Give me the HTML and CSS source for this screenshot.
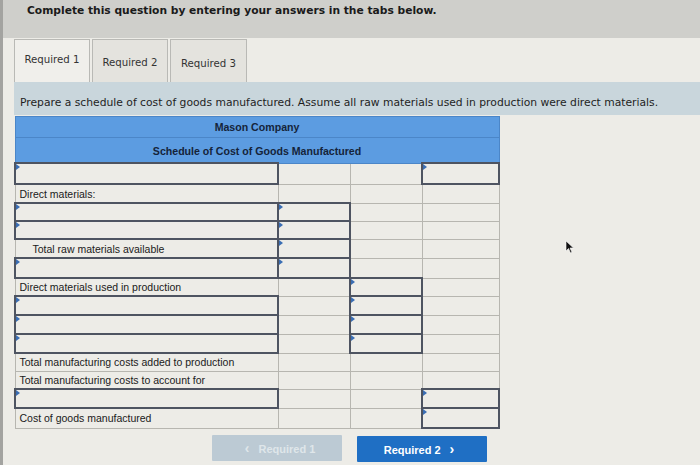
FILE: index.html
```html
<!DOCTYPE html>
<html>
<head>
<meta charset="utf-8">
<link rel="stylesheet" href="styles.css">
</head>
<body>
<div class="page">
  <div class="topbar">Complete this question by entering your answers in the tabs below.</div>
  <div class="tabs">
    <div class="tab active">Required 1</div>
    <div class="tab">Required 2</div>
    <div class="tab">Required 3</div>
  </div>
  <div class="prompt">Prepare a schedule of cost of goods manufactured. Assume all raw materials used in production were direct materials.</div>
  <table class="sched">
    <colgroup><col class="c-label"><col class="c-num"><col class="c-num"><col class="c-last"></colgroup>
    <tr class="hd"><th colspan="4">Mason Company</th></tr>
    <tr class="hd hd2"><th colspan="4">Schedule of Cost of Goods Manufactured</th></tr>
    <tr class="r21"><td class="in"></td><td></td><td></td><td class="in"></td></tr>
    <tr><td>Direct materials:</td><td></td><td></td><td></td></tr>
    <tr class="r18"><td class="in"></td><td class="in"></td><td></td><td></td></tr>
    <tr class="r18"><td class="in"></td><td class="in"></td><td></td><td></td></tr>
    <tr><td class="indent">Total raw materials available</td><td class="in"></td><td></td><td></td></tr>
    <tr class="r20"><td class="in"></td><td class="in"></td><td></td><td></td></tr>
    <tr class="r18"><td>Direct materials used in production</td><td></td><td class="in"></td><td></td></tr>
    <tr><td class="in"></td><td></td><td class="in"></td><td></td></tr>
    <tr><td class="in"></td><td></td><td class="in"></td><td></td></tr>
    <tr><td class="in"></td><td></td><td class="in"></td><td></td></tr>
    <tr class="r18"><td>Total manufacturing costs added to production</td><td></td><td></td><td></td></tr>
    <tr class="r18"><td>Total manufacturing costs to account for</td><td></td><td></td><td></td></tr>
    <tr><td class="in"></td><td></td><td></td><td class="in"></td></tr>
    <tr class="r20"><td>Cost of goods manufactured</td><td></td><td></td><td class="in"></td></tr>
  </table>
  <div class="nav">
    <button class="btn prev" disabled><span class="chev">&lsaquo;</span> Required 1</button>
    <button class="btn next">Required 2 <span class="chev">&rsaquo;</span></button>
  </div>
  <svg class="cursor" width="10" height="14" viewBox="0 0 10 14"><path d="M1 1 L1 11 L3.5 8.5 L5.5 13 L7 12.3 L5 8 L8.5 8 Z" fill="#111" stroke="#fff" stroke-width="0.6"/></svg>
</div>
</body>
</html>
```

FILE: styles.css
```css
html, body {
  margin: 0;
  padding: 0;
  background: #edece7;
}
.page {
  position: relative;
  width: 700px;
  height: 465px;
  overflow: hidden;
  box-sizing: border-box;
  border-left: 3px solid #a3a3a0;
  background: #edece7;
  font-family: "Liberation Sans", Arial, sans-serif;
  color: #222;
}
.topbar {
  height: 38px;
  background: #cfcfcb;
  padding: 4px 0 0 24px;
  box-sizing: border-box;
  font-family: "DejaVu Sans", Verdana, sans-serif;
  font-weight: bold;
  font-size: 10.7px;
  color: #1a1a1a;
}
.tabs {
  display: flex;
  gap: 2px;
  padding: 1px 0 0 11px;
  height: 44px;
  box-sizing: border-box;
}
.tab {
  width: 76px;
  box-sizing: border-box;
  border: 1px solid #b9b9b5;
  border-bottom: none;
  background: #e4e3de;
  font-family: "DejaVu Sans", Verdana, sans-serif;
  font-size: 10.2px;
  color: #333;
  display: flex;
  align-items: center;
  justify-content: center;
  padding-top: 2px;
}
.tab.active {
  background: #f0efeb;
  padding-top: 0;
  padding-bottom: 4px;
}
.tab:nth-child(3) { width: 77px; padding-top: 4px; }
.prompt {
  margin-left: 11px;
  height: 33px;
  background: #c9d6dc;
  padding: 14px 0 0 6px;
  box-sizing: border-box;
  font-family: "DejaVu Sans", Verdana, sans-serif;
  font-size: 10.75px;
  color: #1e1e1e;
  white-space: nowrap;
}
.sched {
  margin: 1px 0 0 11px;
  border-collapse: collapse;
  table-layout: fixed;
  width: 484px;
}
.c-label { width: 263px; }
.c-num { width: 72px; }
.c-last { width: 77px; }
.sched th {
  background: #5c9ce1;
  color: #15243a;
  font-weight: bold;
  font-size: 10.6px;
  height: 20px;
  padding: 0;
  text-align: center;
  border: 1px solid #4b86c8;
}
.sched .hd2 th { height: 22px; padding-top: 2px; }
.sched td {
  height: 19px;
  padding: 0 0 0 4px;
  border: 1px solid #b7b6b0;
  font-size: 10.5px;
  color: #202020;
  white-space: nowrap;
  position: relative;
  box-sizing: border-box;
}
.sched tr.r18 td { height: 18px; }
.sched tr.r20 td { height: 20px; }
.sched tr.r21 td { height: 21px; }
.sched td.indent { padding-left: 17px; }
.sched td.in {
  border: 2px solid #4e5461;
}
.sched td.in::before {
  content: "";
  position: absolute;
  left: 0;
  top: 0;
  border-top: 3px solid transparent;
  border-bottom: 3px solid transparent;
  border-left: 4px solid #3a6db3;
}
.nav {
  display: flex;
  gap: 15px;
  margin: 6px 0 0 209px;
}
.btn {
  width: 130px;
  height: 26px;
  border: none;
  border-radius: 1px;
  font-family: "Liberation Sans", Arial, sans-serif;
  font-weight: bold;
  font-size: 11px;
  padding: 0;
}
.btn.prev {
  background: #bccad4;
  color: #dfe6ea;
}
.btn.next {
  background: #1f6fc4;
  color: #ffffff;
  margin-top: 1px;
}
.chev {
  font-size: 14px;
  margin: 0 6px;
}
.cursor {
  position: absolute;
  left: 562px;
  top: 240px;
}
```
